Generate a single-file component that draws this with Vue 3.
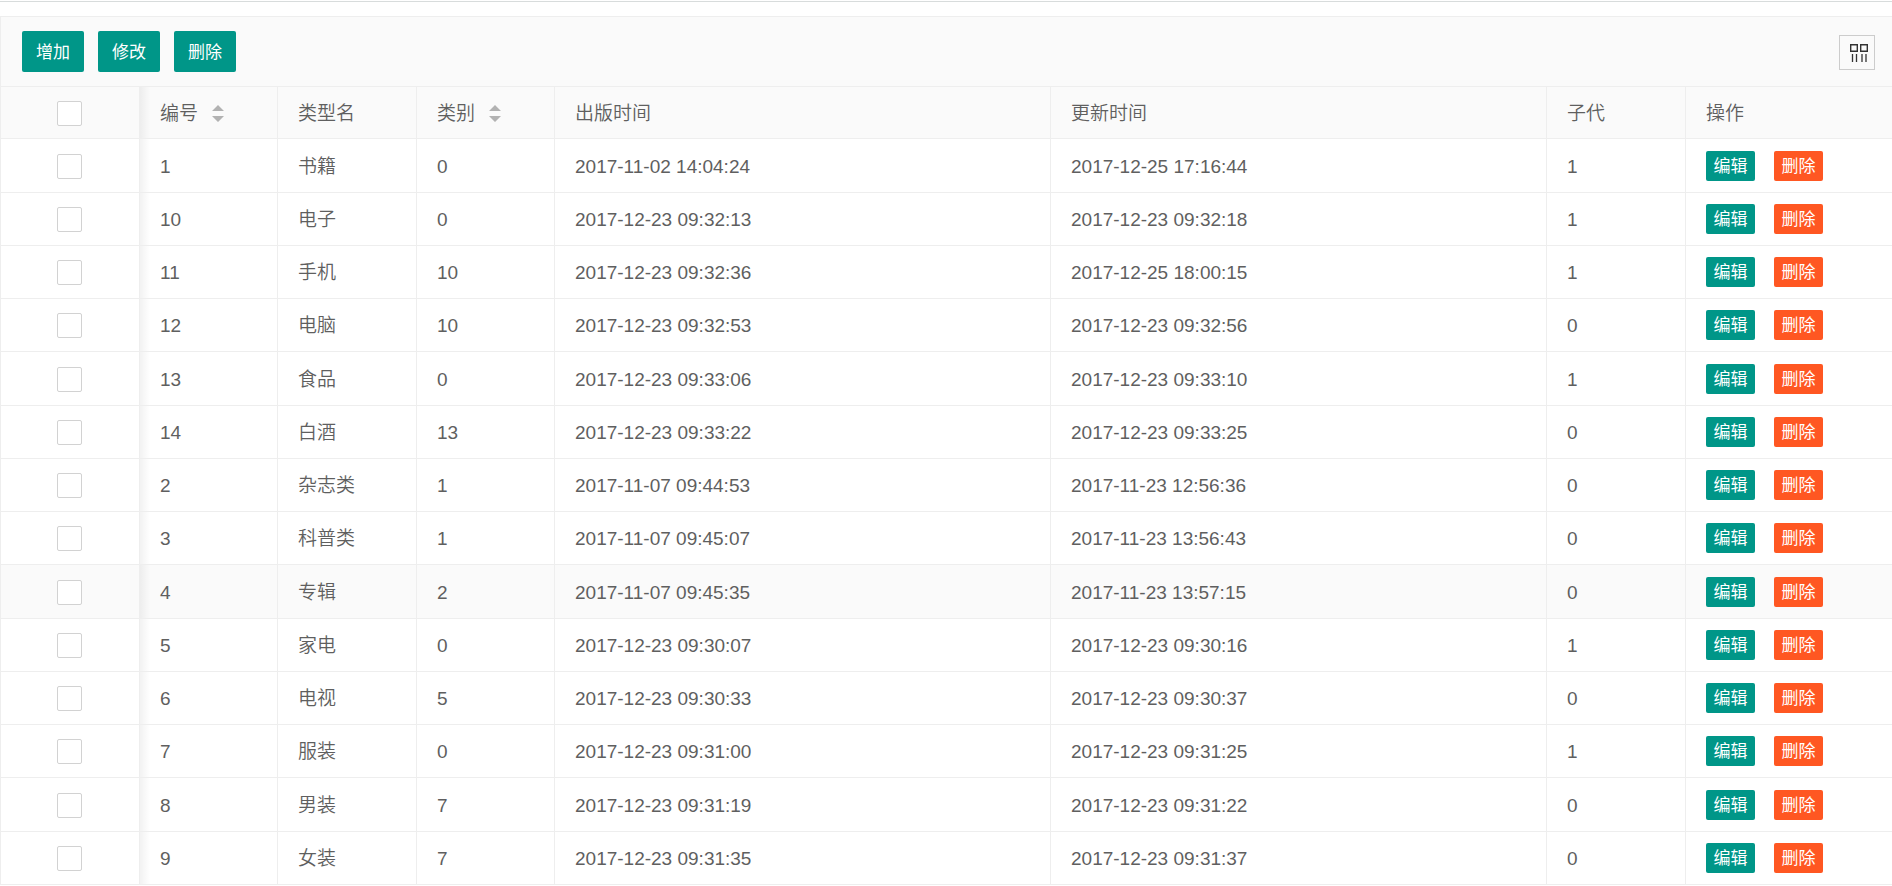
<script setup>
import { ref } from 'vue'

const rows = ref([
  ['1', '书籍', '0', '2017-11-02 14:04:24', '2017-12-25 17:16:44', '1'],
  ['10', '电子', '0', '2017-12-23 09:32:13', '2017-12-23 09:32:18', '1'],
  ['11', '手机', '10', '2017-12-23 09:32:36', '2017-12-25 18:00:15', '1'],
  ['12', '电脑', '10', '2017-12-23 09:32:53', '2017-12-23 09:32:56', '0'],
  ['13', '食品', '0', '2017-12-23 09:33:06', '2017-12-23 09:33:10', '1'],
  ['14', '白酒', '13', '2017-12-23 09:33:22', '2017-12-23 09:33:25', '0'],
  ['2', '杂志类', '1', '2017-11-07 09:44:53', '2017-11-23 12:56:36', '0'],
  ['3', '科普类', '1', '2017-11-07 09:45:07', '2017-11-23 13:56:43', '0'],
  ['4', '专辑', '2', '2017-11-07 09:45:35', '2017-11-23 13:57:15', '0'],
  ['5', '家电', '0', '2017-12-23 09:30:07', '2017-12-23 09:30:16', '1'],
  ['6', '电视', '5', '2017-12-23 09:30:33', '2017-12-23 09:30:37', '0'],
  ['7', '服装', '0', '2017-12-23 09:31:00', '2017-12-23 09:31:25', '1'],
  ['8', '男装', '7', '2017-12-23 09:31:19', '2017-12-23 09:31:22', '0'],
  ['9', '女装', '7', '2017-12-23 09:31:35', '2017-12-23 09:31:37', '0'],
])

const columns = [
  { title: '编号', sort: true },
  { title: '类型名' },
  { title: '类别', sort: true },
  { title: '出版时间' },
  { title: '更新时间' },
  { title: '子代' },
  { title: '操作' },
]

const active = '4'
const checked = ref([])

function toggleAll(event) {
  checked.value = event.target.checked ? rows.value.map((r) => r[0]) : []
}
</script>

<template>
  <main class="page">
    <section class="panel">
      <div class="toolbar">
        <div class="actions">
          <button type="button" class="btn">增加</button>
          <button type="button" class="btn">修改</button>
          <button type="button" class="btn">删除</button>
        </div>
        <button type="button" class="filter" aria-label="筛选列">
          <svg width="18" height="18" viewBox="0 0 18 18" fill="none" stroke="#333" aria-hidden="true">
            <path stroke-width="1.4" d="M.7.7h6.6v6.6H.7zM10.7.7h6.6v6.6h-6.6z" />
            <path stroke-width="1.3" d="M2.5 10v8M6.5 10v8M12 10v8M16 10v8" />
          </svg>
        </button>
      </div>
      <table class="grid">
        <colgroup>
          <col class="c-check" />
          <col class="c-id" />
          <col class="c-name" />
          <col class="c-kind" />
          <col />
          <col />
          <col class="c-child" />
          <col class="c-ops" />
        </colgroup>
        <thead>
          <tr>
            <th class="pick">
              <input type="checkbox" class="box" aria-label="全选" @change="toggleAll" />
            </th>
            <th v-for="c in columns" :key="c.title" scope="col">
              <span class="head">
                {{ c.title }}
                <button v-if="c.sort" type="button" class="sort" :aria-label="c.title + '排序'">
                  <svg width="12" height="18" viewBox="0 0 12 18" fill="#b2b2b2" aria-hidden="true">
                    <path d="M0 6L6 0l6 6zM0 11h12l-6 6z" />
                  </svg>
                </button>
              </span>
            </th>
          </tr>
        </thead>
        <tbody>
          <tr v-for="r in rows" :key="r[0]" :class="{ active: r[0] === active }">
            <td class="pick">
              <input v-model="checked" type="checkbox" class="box" :value="r[0]" :aria-label="'选择 ' + r[1]" />
            </td>
            <td v-for="(v, i) in r" :key="i">{{ v }}</td>
            <td class="last">
              <div class="ops">
                <button type="button" class="btn small">编辑</button>
                <button type="button" class="btn small danger">删除</button>
              </div>
            </td>
          </tr>
        </tbody>
      </table>
    </section>
  </main>
</template>

<style>
body {
  margin: 0;
  background: #fff;
}
</style>

<style scoped>
.page {
  margin-top: 1px;
  padding-top: 14px;
  border-top: 1px solid #d8dcdc;
  color: #5f5f5f;
  font: 350 19px/28px "Liberation Sans", "Noto Sans CJK SC", sans-serif;
}
.panel {
  border-top: 1px solid #eee;
  border-left: 1px solid #eee;
}
.toolbar {
  display: flex;
  justify-content: space-between;
  padding: 14px 17px 14px 21px;
  border-bottom: 1px solid #eee;
  background: #fafafa;
}
.actions {
  display: flex;
  gap: 14px;
}
button {
  display: block;
  box-sizing: border-box;
  margin: 0;
  padding: 0;
  border: 0;
  font: inherit;
  cursor: pointer;
}
.btn {
  width: 62px;
  height: 41px;
  padding-top: 2px;
  border-radius: 2px;
  background: #009688;
  color: #fff;
  font-size: 17px;
  font-weight: 400;
  line-height: 39px;
  white-space: nowrap;
}
.btn.small {
  width: 49px;
  height: 30px;
  line-height: 28px;
}
.btn.danger {
  background: #ff5722;
}
.filter {
  display: flex;
  align-items: center;
  justify-content: center;
  width: 36px;
  height: 35px;
  margin-top: 4px;
  padding-left: 4px;
  border: 1px solid #ccc;
  background: none;
}
.grid {
  width: 100%;
  table-layout: fixed;
  border-collapse: separate;
  border-spacing: 0;
}
.c-check,
.c-name,
.c-child {
  width: 139px;
}
.c-id,
.c-kind {
  width: 138px;
}
.c-ops {
  width: 206px;
}
th,
td {
  box-sizing: border-box;
  height: 53px;
  padding: 2px 20px 0;
  border-right: 1px solid #eee;
  border-bottom: 1px solid #eee;
  font-weight: 350;
  text-align: left;
  vertical-align: middle;
  white-space: nowrap;
}
th {
  height: 52px;
  background-color: #fafafa;
}
tr > :last-child {
  border-right: 0;
}
td.last {
  padding-top: 0;
}
tbody tr:nth-child(4n + 1) td {
  height: 54px;
}
.active td {
  background-color: #fafafa;
}
.pick + th,
.pick + td {
  background-image: linear-gradient(to right, rgba(0, 0, 0, 0.05), rgba(0, 0, 0, 0));
  background-repeat: no-repeat;
  background-size: 10px 100%;
}
th.pick,
td.pick {
  padding: 1px 1px 0 0;
}
.box {
  appearance: none;
  display: block;
  box-sizing: border-box;
  width: 25px;
  height: 25px;
  margin: 0 auto;
  border: 1px solid #d2d2d2;
  border-radius: 2px;
  background: #fff;
}
.box:checked {
  border-color: #009688;
  background: #009688;
}
.head {
  display: flex;
  align-items: center;
  gap: 14px;
}
.sort {
  background: none;
}
.sort svg {
  display: block;
}
.ops {
  display: flex;
  gap: 19px;
}
</style>
